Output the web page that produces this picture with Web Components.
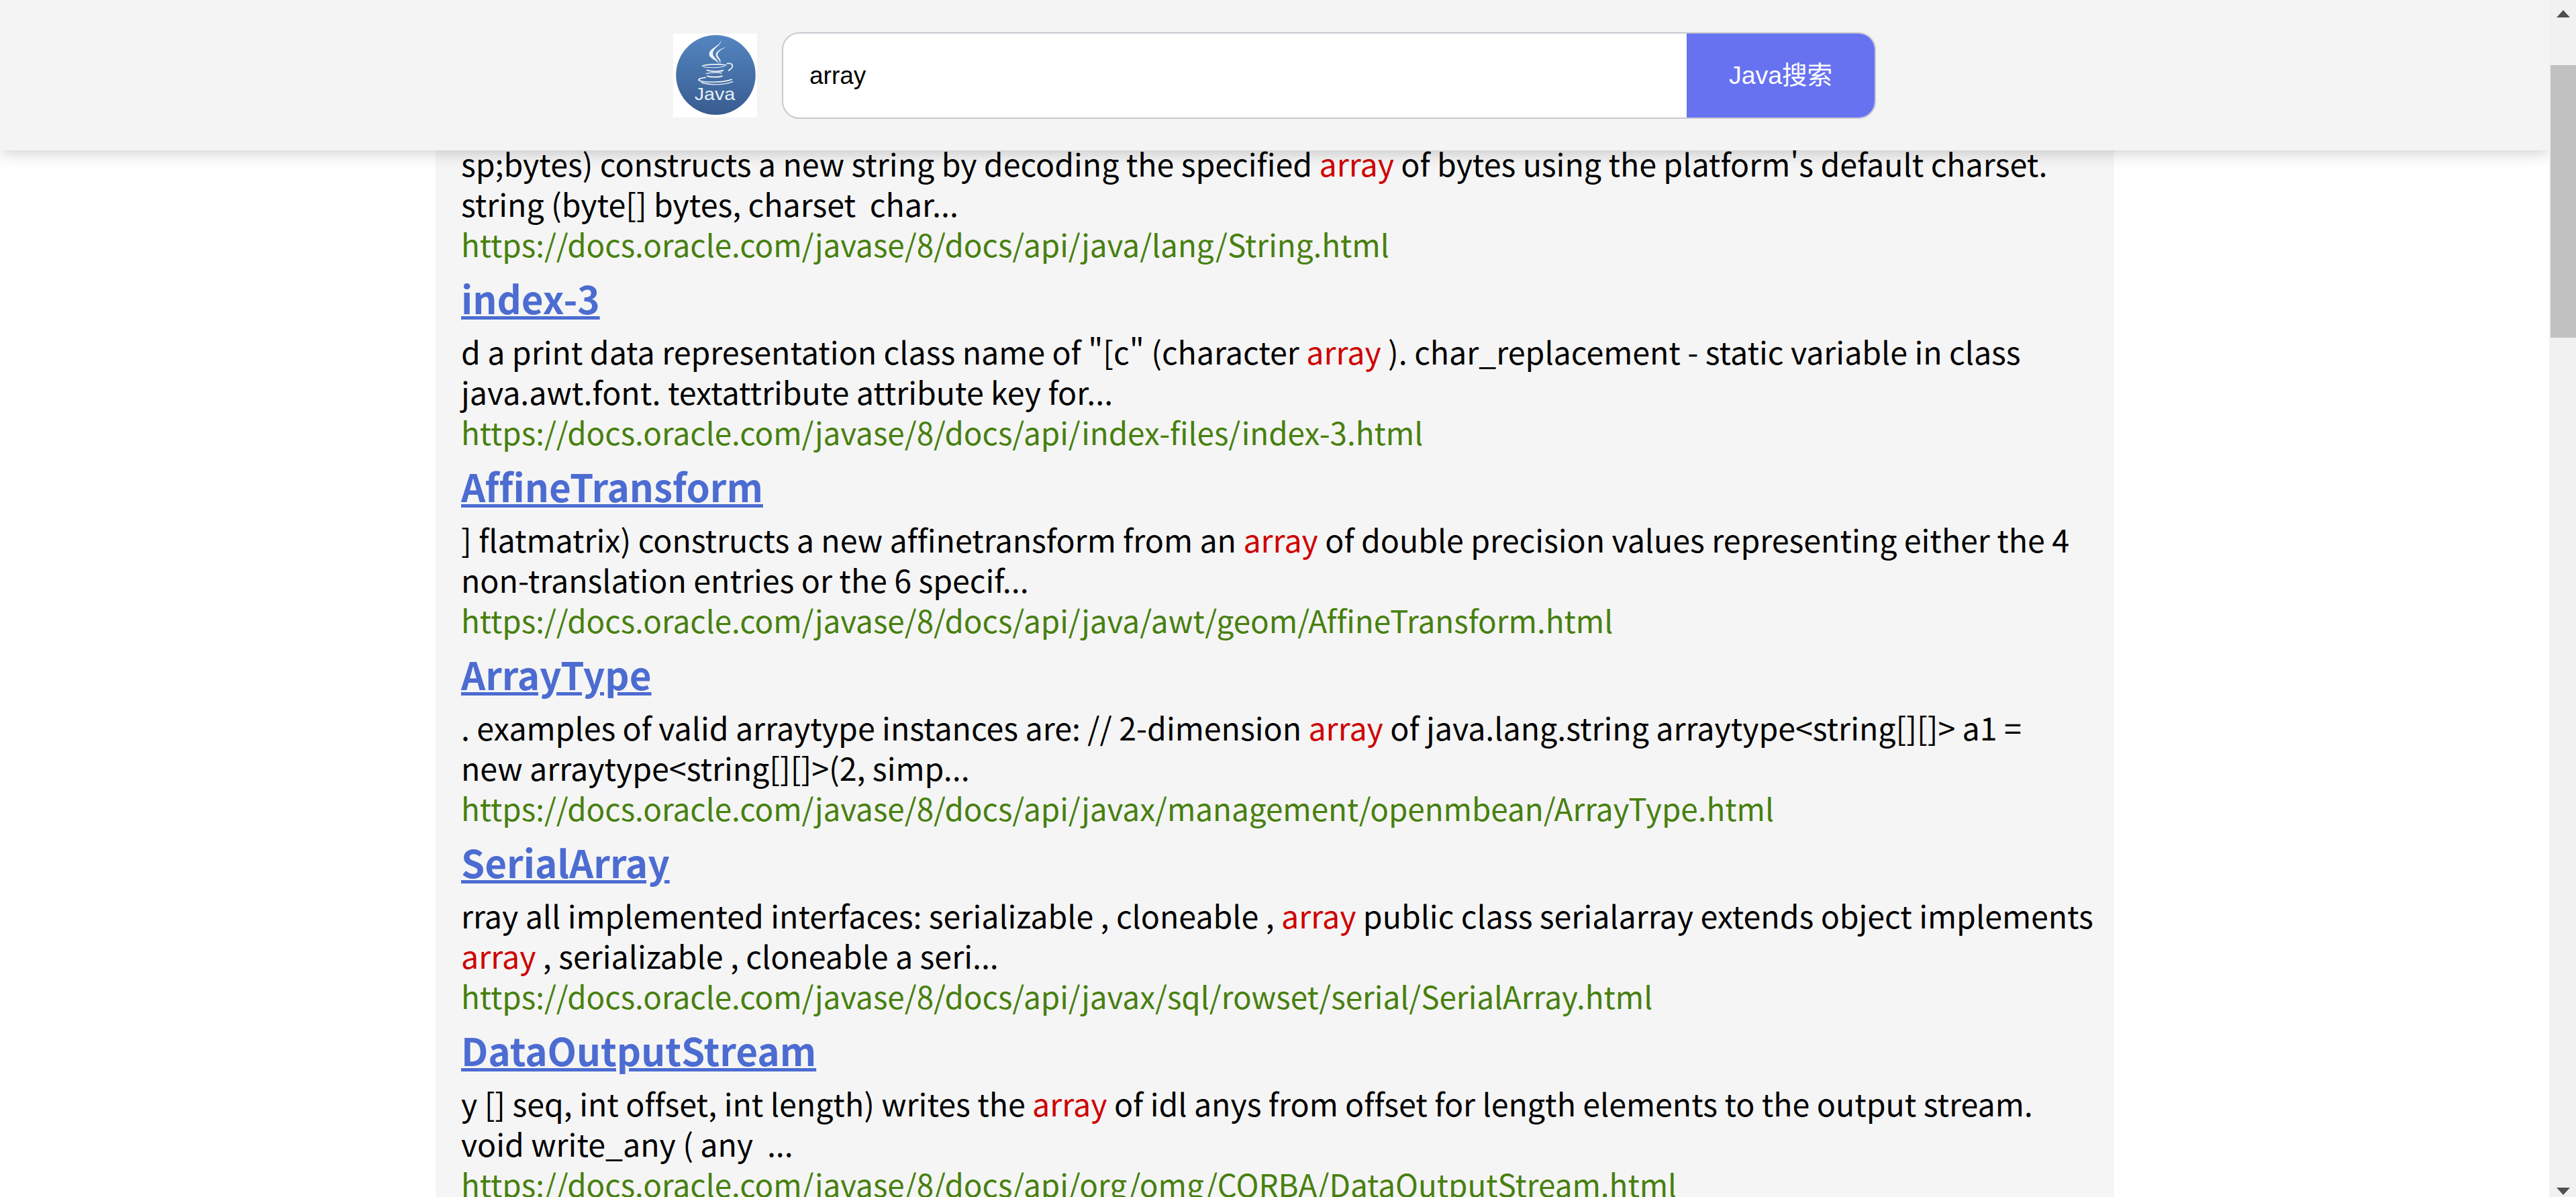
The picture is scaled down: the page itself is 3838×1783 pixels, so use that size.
<!DOCTYPE html>
<html lang="zh">
<head>
<meta charset="utf-8">
<title>Java搜索</title>
<style>
  html, body { margin: 0; height: 100%; overflow: hidden; background: #fff; }
</style>
</head>
<body>
<search-page>
  <search-header slot="header" value="array"></search-header>
  <result-item link="https://docs.oracle.com/javase/8/docs/api/java/lang/String.html">sp;bytes) constructs a new string by decoding the specified <mark>array</mark> of bytes using the platform's default charset.<br>string (byte[] bytes, charset &nbsp;char...</result-item>
  <result-item name="index-3" link="https://docs.oracle.com/javase/8/docs/api/index-files/index-3.html">d a print data representation class name of "[c" (character <mark>array</mark> ). char_replacement - static variable in class<br>java.awt.font. textattribute attribute key for...</result-item>
  <result-item name="AffineTransform" link="https://docs.oracle.com/javase/8/docs/api/java/awt/geom/AffineTransform.html">] flatmatrix) constructs a new affinetransform from an <mark>array</mark> of double precision values representing either the 4<br>non-translation entries or the 6 specif...</result-item>
  <result-item name="ArrayType" link="https://docs.oracle.com/javase/8/docs/api/javax/management/openmbean/ArrayType.html">. examples of valid arraytype instances are: // 2-dimension <mark>array</mark> of java.lang.string arraytype&lt;string[][]&gt; a1 =<br>new arraytype&lt;string[][]&gt;(2, simp...</result-item>
  <result-item name="SerialArray" link="https://docs.oracle.com/javase/8/docs/api/javax/sql/rowset/serial/SerialArray.html">rray all implemented interfaces: serializable , cloneable , <mark>array</mark> public class serialarray extends object implements<br><mark>array</mark> , serializable , cloneable a seri...</result-item>
  <result-item name="DataOutputStream" link="https://docs.oracle.com/javase/8/docs/api/org/omg/CORBA/DataOutputStream.html">y [] seq, int offset, int length) writes the <mark>array</mark> of idl anys from offset for length elements to the output stream.<br>void write_any ( any &nbsp;...</result-item>
</search-page>

<script>
class SearchPage extends HTMLElement{
    constructor(){
        super();
        this.attachShadow({ mode: "open" })
    }
    connectedCallback(){
        this.shadowRoot.innerHTML = `
            <style>
                :host{ display: flex; height: 100vh; overflow: hidden; }
                .view{ flex: 1; min-width: 0; position: relative; overflow: hidden; }
                .overlay{ position: absolute; top: 0; left: 0; right: 0; z-index: 2; }
                .column{ width: 2501px; margin: 0 0 0 649px; box-sizing: border-box; padding: 213px 15px 0 38px; background: #f5f5f5; min-height: 100%; }
            </style>
            <div class="view">
                <div class="overlay"><slot name="header"></slot></div>
                <div class="column"><slot></slot></div>
            </div>
            <fake-scrollbar></fake-scrollbar>
        `
    }
}

class SearchHeader extends HTMLElement{
    constructor(){
        super();
        this.attachShadow({ mode: "open" })
    }
    connectedCallback(){
        const value = this.getAttribute('value') || ''
        this.shadowRoot.innerHTML = `
            <style>
                :host{ display: flex; align-items: center; height: 224px; box-sizing: border-box; padding-left: 1003px; background: #f4f4f4; box-shadow: 0 2px 24px rgba(0,0,0,.22); }
                .box{ display: flex; width: 1630px; height: 129px; box-sizing: border-box; margin-left: 37px; border: 2px solid #c9c9d1; border-radius: 26px; overflow: hidden; background: #fff; }
                .query{ flex: 1; padding-left: 39px; font: 37px/125px "Liberation Sans", sans-serif; color: #000; }
                .go{ width: 280px; background: #6772f1; color: #fff; text-align: center; font: 37.5px/125px "Liberation Sans", "Noto Sans CJK SC", sans-serif; }
            </style>
            <java-logo></java-logo>
            <div class="box">
                <div class="query">${value}</div>
                <div class="go">Java搜索</div>
            </div>
        `
    }
}

class JavaLogo extends HTMLElement{
    constructor(){
        super();
        this.attachShadow({ mode: "open" })
    }
    connectedCallback(){
        this.shadowRoot.innerHTML = `
            <style>
                :host{ display: block; width: 125px; height: 125px; flex: none; background: #fff; }
                svg{ display: block; width: 100%; height: 100%; }
                text{ font: 75px "Liberation Sans", sans-serif; fill: #e8eef6; }
            </style>
            <svg viewBox="112 147 327 375" preserveAspectRatio="none">
                <defs>
                    <linearGradient id="blue" x1="0" y1="0" x2="0" y2="1">
                        <stop offset="0" stop-color="#5385c0"/>
                        <stop offset="1" stop-color="#385c90"/>
                    </linearGradient>
                </defs>
                <ellipse cx="278" cy="332" rx="155" ry="178" fill="url(#blue)"/>
                <g fill="#eaf0f7">
                    <path d="M298 165C308 200 250 210 252 240C254 260 280 265 290 282C286 262 263 250 267 232C272 205 306 200 298 165Z"/>
                    <path d="M318 207C290 215 272 235 280 250C285 262 297 268 293 282C306 265 282 250 285 240C288 225 305 215 318 207Z"/>
                </g>
                <g fill="none" stroke="#eaf0f7" stroke-linecap="round">
                    <path d="M226 292C245 283 295 283 318 288" stroke-width="5"/>
                    <path d="M232 297C255 300 290 300 312 294" stroke-width="3"/>
                    <path d="M322 281C345 276 352 296 328 312" stroke-width="5"/>
                    <path d="M244 311C262 318 290 318 306 312" stroke-width="6"/>
                    <path d="M240 326C262 320 290 321 300 324" stroke-width="4"/>
                    <path d="M246 337C262 343 288 343 302 337" stroke-width="6"/>
                    <path d="M238 343C220 346 208 350 212 356C224 366 310 368 340 352" stroke-width="5"/>
                    <path d="M222 366C258 378 310 378 344 362" stroke-width="4"/>
                </g>
                <text x="195" y="445">Java</text>
            </svg>
        `
    }
}

class ResultItem extends HTMLElement{
    constructor(){
        super();
        this.attachShadow({ mode: "open" })
    }
    connectedCallback(){
        const name = this.getAttribute('name')
        const link = this.getAttribute('link')
        this.shadowRoot.innerHTML = `
            <style>
                :host{ display: block; font: 46.5px/60px "Noto Sans CJK SC", "Open Sans", sans-serif; font-variant-ligatures: none; color: #000; }
                h3{ margin: 0; padding: 20px 0; font-size: 56.5px; line-height: 60px; font-weight: 700; }
                h3 a{ color: #4c6cd1; text-decoration: underline; }
                .url{ color: #47800f; font-size: 45.8px; }
                ::slotted(mark){ background: none; color: #cf0000; }
            </style>
            ${name ? `<h3><a href="#">${name}</a></h3>` : ''}
            <div class="text"><slot></slot></div>
            <div class="url">${link}</div>
        `
    }
}

class FakeScrollbar extends HTMLElement{
    constructor(){
        super();
        this.attachShadow({ mode: "open" })
    }
    connectedCallback(){
        this.shadowRoot.innerHTML = `
            <style>
                :host{ display: flex; flex-direction: column; align-items: center; flex: none; width: 40px; box-sizing: border-box; padding: 15px 0 3px 2px; background: #f1f1f1; }
                svg{ display: block; flex: none; }
                .thumb{ width: 38px; height: 406px; margin-top: 71px; flex: none; background: #c1c1c1; }
                .down{ margin-top: auto; }
            </style>
            <svg width="20" height="11" viewBox="0 0 20 11"><path d="M10 0L20 11H0Z" fill="#505050"/></svg>
            <div class="thumb"></div>
            <svg class="down" width="20" height="11" viewBox="0 0 20 11"><path d="M10 11L20 0H0Z" fill="#505050"/></svg>
        `
    }
}

customElements.define('search-page', SearchPage)
customElements.define('search-header', SearchHeader)
customElements.define('java-logo', JavaLogo)
customElements.define('result-item', ResultItem)
customElements.define('fake-scrollbar', FakeScrollbar)
</script>
</body>
</html>
